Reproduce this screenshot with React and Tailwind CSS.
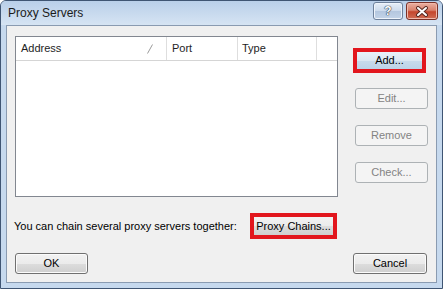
import React from "react";

const btn =
  "flex items-center justify-center h-[21px] rounded-[3px] border border-[#707070] bg-[linear-gradient(#f2f2f2_0%,#ebebeb_50%,#dddddd_50%,#cfcfcf_100%)] shadow-[inset_0_0_0_1px_#fbfbfb] text-[11px] text-black";
const disabled =
  "flex items-center justify-center h-[21px] rounded-[3px] border border-[#adb2b5] bg-[#f4f4f4] text-[11px] text-[#838383]";

function CloseGlyph() {
  return (
    <svg width="14" height="11" viewBox="0 0 14 11">
      <path d="M3 2 L11 9 M11 2 L3 9" stroke="#5a2a22" strokeWidth="4" strokeLinecap="round" />
      <path d="M3 2 L11 9 M11 2 L3 9" stroke="#ffffff" strokeWidth="2" strokeLinecap="round" />
    </svg>
  );
}

export default function App() {
  return (
    <div className="w-[443px] h-[289px] flex flex-col bg-[#c6d9ee] border border-[#3f5573] rounded-t-[6px] overflow-hidden font-['Liberation_Sans',Arial,sans-serif]">
      {/* title bar */}
      <div className="h-[24px] flex items-start justify-between bg-[linear-gradient(#b9cfe9,#d6e4f3)]">
        <span className="pl-[7px] pt-[5px] text-[12px] leading-[14px] text-[#1b1b1b]">Proxy Servers</span>
        <div className="flex gap-[3px] pt-[1px] pr-[4px]">
          <div className="w-[30px] h-[18px] rounded-[3px] border border-[#6e819b] bg-[linear-gradient(#e6eef8_0%,#cddbec_48%,#b4c7df_52%,#c3d4e8_100%)] shadow-[inset_0_0_0_1px_#eef4fb] flex items-center justify-center">
            <span className="text-[12px] font-bold leading-none text-white [text-shadow:0_0_1px_#2e3b4d,0_0_1px_#2e3b4d,0_0_1px_#2e3b4d]">?</span>
          </div>
          <div className="w-[32px] h-[18px] rounded-[3px] border border-[#7a3128] bg-[linear-gradient(#eab0a2_0%,#d9826d_45%,#c4462d_55%,#cf6d55_100%)] shadow-[inset_0_0_0_1px_#f0b9ab] flex items-center justify-center">
            <CloseGlyph />
          </div>
        </div>
      </div>

      {/* body */}
      <div className="flex-1 mx-[5px] mb-[5px] border border-[#8a9bb1] bg-[#f0f0f0] flex flex-col px-[8px] pt-[10px]">
        <div className="flex">
          {/* list view */}
          <div className="w-[323px] h-[161px] border border-[#828790] bg-white flex flex-col">
            <div className="h-[24px] flex border-b border-[#d5d5d5] text-[11px] text-[#1e1e1e]">
              <div className="w-[151px] border-r border-[#dedede] flex items-center pl-[5px] relative">
                <span>Address</span>
                <svg className="absolute left-[131px] top-[7px]" width="6" height="10" viewBox="0 0 6 10">
                  <path d="M5.5 0.5 L0.5 9.5" stroke="#9a9a9a" strokeWidth="1" />
                </svg>
              </div>
              <div className="w-[71px] border-r border-[#dedede] flex items-center pl-[5px]">Port</div>
              <div className="w-[79px] border-r border-[#dedede] flex items-center pl-[4px]">Type</div>
              <div className="flex-1" />
            </div>
          </div>

          {/* buttons */}
          <div className="ml-[15px] w-[75px] flex flex-col">
            <div className="mt-[12px] w-[73px] h-[25px] border-[4px] border-[#e2161d] bg-[linear-gradient(#e9f1f8_0%,#dbe7f2_50%,#c8dbec_50%,#bcd3e8_100%)] flex items-center justify-center text-[11px] text-black">
              Add...
            </div>
            <div className={`${disabled} mt-[15px] ml-[2px] w-[73px]`}>Edit...</div>
            <div className={`${disabled} mt-[16px] ml-[2px] w-[73px]`}>Remove</div>
            <div className={`${disabled} mt-[16px] ml-[2px] w-[73px]`}>Check...</div>
          </div>
        </div>

        {/* chain row */}
        <div className="mt-[16px] flex items-center">
          <span className="w-[236px] -ml-[1px] text-[11px] text-black whitespace-nowrap">
            You can chain several proxy servers together:
          </span>
          <div className="w-[87px] h-[26px] border-[4px] border-[#e2161d] bg-[linear-gradient(#f2f2f2_0%,#ebebeb_50%,#dddddd_50%,#cfcfcf_100%)] flex items-center justify-center text-[11px] text-black whitespace-nowrap">
            Proxy Chains...
          </div>
        </div>

        {/* bottom buttons */}
        <div className="mt-[14px] flex justify-between pr-[1px]">
          <div className={`${btn} w-[73px]`}>OK</div>
          <div className={`${btn} w-[74px]`}>Cancel</div>
        </div>
      </div>
    </div>
  );
}
